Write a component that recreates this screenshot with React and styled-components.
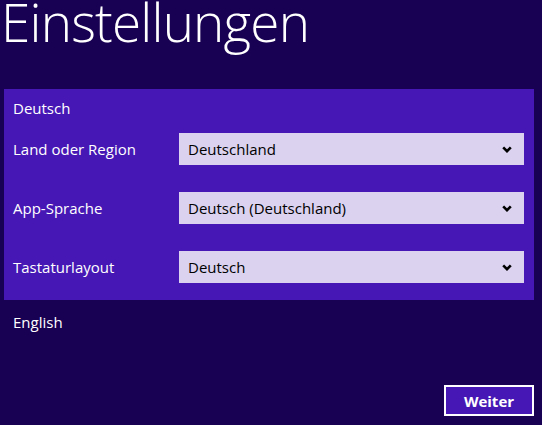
import styled, { createGlobalStyle } from "styled-components";

const GlobalStyle = createGlobalStyle`
  html, body {
    margin: 0;
    padding: 0;
    background: #180052;
  }
  body {
    font-family: "Open Sans", "Noto Sans", sans-serif;
  }
`;

const Page = styled.div`
  height: 100vh;
  display: flex;
  flex-direction: column;
  color: #ffffff;
  overflow: hidden;
`;

const Title = styled.h1`
  margin: -6px 0 0;
  padding-left: 1px;
  font-size: 53px;
  font-weight: 300;
  line-height: 56px;
  letter-spacing: -0.8px;
  color: #ffffff;
`;

const Panel = styled.section`
  margin: 39px 8px 0 4px;
  padding: 8px 10px 17px 9px;
  background: #4617b4;
`;

const GroupName = styled.div`
  font-size: 15px;
  line-height: 22px;
  margin-bottom: 14px;
`;

const Rows = styled.div`
  display: grid;
  grid-template-columns: 166px 1fr;
  row-gap: 27px;
  align-items: center;
`;

const Label = styled.label`
  font-size: 15px;
  line-height: 20px;
`;

const Select = styled.div`
  height: 32px;
  display: flex;
  align-items: center;
  justify-content: space-between;
  padding: 0 12px 0 9px;
  background: #dad2ef;
  color: #000000;
  font-size: 15px;
`;

const Other = styled.div`
  padding: 11px 13px 0;
  font-size: 15px;
  line-height: 22px;
`;

const Footer = styled.div`
  margin-top: auto;
  display: flex;
  justify-content: flex-end;
  padding: 0 8px 9px 0;
`;

const Button = styled.button`
  width: 90px;
  height: 31px;
  border: 2px solid #ffffff;
  background: #4617b4;
  color: #ffffff;
  font-family: "Open Sans", "Noto Sans", sans-serif;
  font-size: 15px;
  font-weight: 700;
  padding: 0;
`;

const Chevron = () => (
  <svg width="10" height="7" viewBox="0 0 10 7">
    <path d="M1.2 1.4 L5 5.2 L8.8 1.4" fill="none" stroke="#000" strokeWidth="2.6" />
  </svg>
);

const fields = [
  ["Land oder Region", "Deutschland"],
  ["App-Sprache", "Deutsch (Deutschland)"],
  ["Tastaturlayout", "Deutsch"],
];

export default function App() {
  return (
    <Page>
      <GlobalStyle />
      <Title>Einstellungen</Title>
      <Panel>
        <GroupName>Deutsch</GroupName>
        <Rows>
          {fields.map(([label, value]) => [
            <Label key={label}>{label}</Label>,
            <Select key={value}>
              <span>{value}</span>
              <Chevron />
            </Select>,
          ])}
        </Rows>
      </Panel>
      <Other>English</Other>
      <Footer>
        <Button>Weiter</Button>
      </Footer>
    </Page>
  );
}
